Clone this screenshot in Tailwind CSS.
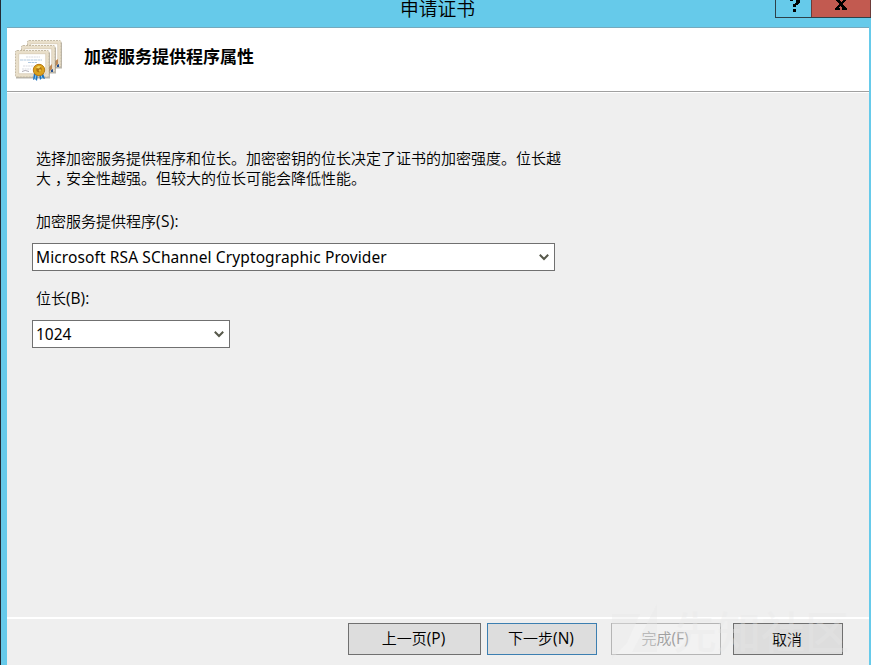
<!DOCTYPE html>
<html lang="zh-CN">
<head>
<meta charset="utf-8">
<title>申请证书</title>
<script src="https://cdn.jsdelivr.net/npm/@tailwindcss/browser@4"></script>
</head>
<body class="h-[665px] w-[871px] overflow-hidden bg-[#66caea] font-['Noto_Sans','Noto_Sans_CJK_SC',sans-serif] text-[15px] text-black">
<div class="flex h-[665px] flex-col border-l border-[#222b35] pl-[6px] pr-[2px]">
  <header class="relative -mr-[2px] flex h-[27px] shrink-0 justify-end">
    <h1 class="absolute top-[-4px] left-[393px] text-[18.8px] leading-[27px] font-[350] whitespace-nowrap">申请证书</h1>
    <div class="flex h-[18px] w-[96px] border-b border-l border-[#2d4149]">
      <button class="flex w-[35px] items-start justify-center" aria-label="帮助">
        <svg class="mt-0 ml-[3px] h-[12px] w-[12px]" viewBox="0 0 12 12" shape-rendering="crispEdges"><path d="M1 0h3v1H1zM7 0h4v3H7zM6 3h4v1H6zM4 4h5v1H4zM4 5h3v2H4zM4 9h3v3H4z"/></svg>
      </button>
      <button class="flex w-[60px] items-start justify-center border-x border-[#6d3b39] bg-[#c25a50]" aria-label="关闭">
        <svg class="ml-[-1px] h-[10px] w-[12px]" viewBox="0 0 12 10" shape-rendering="crispEdges"><path d="M1 0h4v1H1zM8 0h3v1H8zM2 1h4v1H2zM7 1h3v1H7zM3 2h6v1H3zM4 3h4v2H4zM3 5h6v1H3zM2 6h3v1H2zM6 6h4v1H6zM1 7h3v1H1zM7 7h4v1H7zM0 8h5v2H0zM7 8h5v2H7z"/></svg>
      </button>
    </div>
  </header>

  <section class="flex h-[66px] shrink-0 border-t border-b border-t-[#75a9bd] border-b-white bg-white">
    <div class="flex h-[64px] w-full border-b border-[#a0a0a0] pl-[7px]">
      <svg class="mt-[10px] h-[44px] w-[52px] shrink-0" viewBox="0 0 52 44">
        <defs>
          <g id="certificate">
            <path d="M1 2.5h34v26H1z" fill="#8e8778" opacity=".6"/>
            <rect x=".5" y=".5" width="33.5" height="26.5" rx="1.5" fill="#e9dfca" stroke="#b9ad96" stroke-width=".8" stroke-dasharray="2 1"/>
            <rect x="3.8" y="3.8" width="27" height="20" fill="#fff" stroke="#d4c7ae" stroke-width=".7"/>
          </g>
        </defs>
        <use href="#certificate" x="13" y="2"/>
        <path d="M41 23l3-2v5l-3 3z" fill="#c08a55"/><path d="M43 27l2-1v3h-2z" fill="#244f91"/>
        <use href="#certificate" x="7" y="7"/>
        <path d="M35 29l3-3v5l-3 3z" fill="#c08a55"/><path d="M37 32l2-1v3h-2z" fill="#244f91"/>
        <use href="#certificate" x="1" y="12"/>
        <path d="M12 19h14M9 28h12M8 31h9" stroke="#c8ccd4" stroke-width=".7" stroke-dasharray="2 .6"/>
        <path d="M6 22h22M14 24.5h9" stroke="#9dbbd8" stroke-width=".8" stroke-dasharray="3 .5"/>
        <path d="M8 33.5q3-2 7 0" fill="none" stroke="#8e8893" stroke-width=".7"/>
        <path d="M20 35l4 1-1 7-2-2-2 1zM25 36l4-1 2 6-3-1-2 2z" fill="#1d72bf"/>
        <path d="M22 37l-1 4M27 37l1 3" stroke="#8ccbf0"/>
        <circle cx="25" cy="32" r="5.7" fill="#dba21c" stroke="#b97a12" stroke-width="1"/>
        <circle cx="25" cy="31.5" r="2.7" fill="#ae7414"/><path d="M22 30l2-2 3 .5-2 2z" fill="#f6d661"/><circle cx="26" cy="32.5" r="1.2" fill="#eac041"/>
      </svg>
      <h2 class="mt-[16px] ml-[18px] text-[17px] leading-[26px] font-bold whitespace-nowrap">加密服务提供程序属性</h2>
    </div>
  </section>

  <main class="h-[524px] shrink-0 bg-[#efefef] pt-[55px] pl-[25px]">
    <p class="ml-[4px] h-[40px] leading-[20px] font-[350] whitespace-nowrap">选择加密服务提供程序和位长。加密密钥的位长决定了证书的加密强度。位长越<br>大<span class="inline-block h-[20px] w-[15px] indent-[4px] align-top">，</span>安全性越强。但较大的位长可能会降低性能。</p>
    <div class="mt-[23px] ml-[4px] h-[20px] leading-[20px] font-[350]">加密服务提供程序<span class="font-['Open_Sans'] text-[15.5px] tracking-[0.3px] font-normal">(S):</span></div>
    <div class="mt-[12px] flex h-[28px] w-[523px] items-center justify-between border border-[#707070] bg-white pr-[5px] pl-[3px]">
      <span class="pt-[2px] text-[15.5px] tracking-[0.11px] whitespace-nowrap">Microsoft RSA SChannel Cryptographic Provider</span>
      <svg class="h-[7px] w-[10px]" viewBox="0 0 10 7"><path d="M.8.8L5 5l4.2-4.2" fill="none" stroke="#56584a" stroke-width="2"/></svg>
    </div>
    <div class="mt-[17px] ml-[4px] h-[20px] leading-[20px] font-[350]">位长<span class="font-['Open_Sans'] text-[15.5px] font-normal">(B):</span></div>
    <div class="mt-[12px] flex h-[28px] w-[198px] items-center justify-between border border-[#707070] bg-white pr-[5px] pl-[3px]">
      <span class="pt-[2px] text-[15.5px]">1024</span>
      <svg class="h-[7px] w-[10px]" viewBox="0 0 10 7"><path d="M.8.8L5 5l4.2-4.2" fill="none" stroke="#56584a" stroke-width="2"/></svg>
    </div>
  </main>

  <footer class="relative flex h-[48px] shrink-0 border-t-2 border-white bg-[#efefef] pt-[4px] pl-[341px] font-[350]">
    <button class="h-[32px] w-[133px] border border-[#707070] bg-[#dddddd] pr-[2px]">上一页<span class="font-['Open_Sans'] text-[15.5px] font-normal">(P)</span></button>
    <button class="ml-[6px] h-[32px] w-[110px] border border-[#3c7fb1] bg-[#dddddd] pr-[2px]">下一步<span class="font-['Open_Sans'] text-[15.5px] font-normal">(N)</span></button>
    <button class="ml-[14px] h-[32px] w-[110px] border border-[#b5b5b5] bg-[#f2f2f2] pr-[2px] text-[#a0a0a0]" disabled>完成<span class="font-['Open_Sans'] text-[15.5px] font-normal">(F)</span></button>
    <button class="ml-[12px] h-[32px] w-[110px] border border-[#707070] bg-[#dddddd] pr-[2px]">取消</button>
    <div class="pointer-events-none absolute top-[-18px] left-[604px] flex h-[62px] items-center text-[#e8e8e8]/35">
      <svg class="h-[56px] w-[56px]" viewBox="0 0 56 56" fill="currentColor"><path d="M1 10h28L16 39 1 55zM46 0v48H21z"/></svg>
      <span class="ml-[6px] text-[44px] leading-none font-medium whitespace-nowrap">先知社区</span>
    </div>
  </footer>
</div>
</body>
</html>
